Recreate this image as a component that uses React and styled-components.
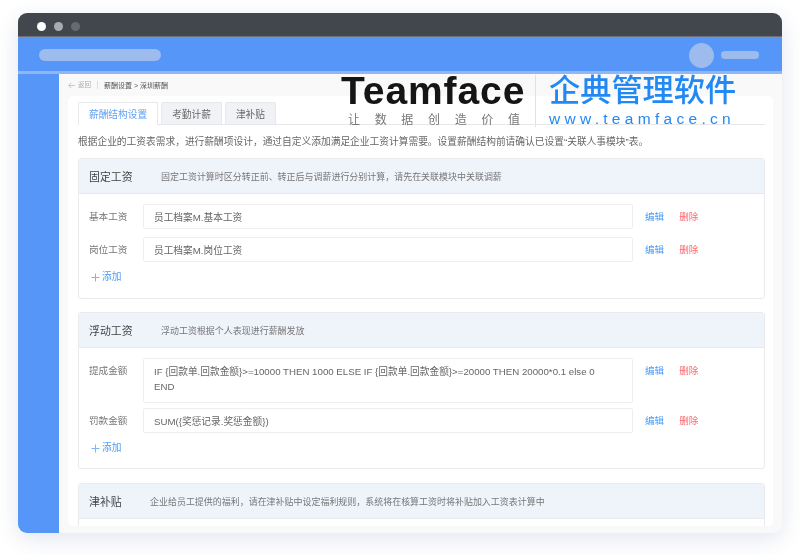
import React from "react";
import styled, { createGlobalStyle } from "styled-components";

const Global = createGlobalStyle`
  html, body { margin: 0; padding: 0; background: #fff; }
  body { font-family: "Liberation Sans", "Noto Sans CJK SC", sans-serif; }
  * { box-sizing: border-box; }
`;
const Page = styled.div`width: 800px; height: 555px; padding: 13px 18px 0; overflow: hidden;`;
const Window = styled.div`
  position: relative; width: 764px; height: 520px; border-radius: 9px; overflow: hidden; background: #f9f9f9;
  display: flex; flex-direction: column; box-shadow: 0 6px 22px rgba(60, 80, 140, 0.14); filter: blur(0.3px);
`;
const TitleBar = styled.div`flex: none; background: #41474d; display: flex; align-items: center; gap: 8px; padding: 3px 0 0 19px; border-bottom: 1px solid #6d7276; height: 24px;`;
const Dot = styled.span`width: ${p => p.$size}px; height: ${p => p.$size}px; border-radius: 50%; background: ${p => p.$color};`;
const Header = styled.div`
  height: 37px; flex: none; background: #5596f8; border-bottom: 3px solid #8fb7f4;
  display: flex; align-items: center; justify-content: space-between; padding: 2px 23px 0 21px;
`;
const Pill = styled.div`width: ${p => p.$w}px; height: ${p => p.$h}px; border-radius: 8px; background: #9dbbec;`;
const User = styled.div`display: flex; align-items: center; gap: 7px;`;
const Avatar = styled.div`width: 25px; height: 25px; border-radius: 50%; background: #9dbbec;`;
const Main = styled.div`flex: 1; min-height: 0; display: flex;`;
const Sidebar = styled.div`width: 41px; flex: none; background: #5596f8;`;
const Content = styled.div`flex: 1; min-width: 0; padding: 0 9px 7px; display: flex; flex-direction: column; background: #f9f9f9;`;
const Crumbs = styled.div`height: 22px; flex: none; display: flex; align-items: center; font-size: 7px; color: #555; white-space: nowrap;`;
const Back = styled.span`color: #aaa; font-size: 6.5px; display: flex; align-items: center; gap: 3px; padding-right: 6px; margin-right: 6px; border-right: 1px solid #ddd; line-height: 8px;`;
const Card = styled.div`flex: 1; min-height: 0; background: #fff; border-radius: 5px; padding: 6px 8px 0 10px; overflow: hidden;`;
const Tabs = styled.div`display: flex; gap: 3px; height: 23px; border-bottom: 1px solid #e6e8ec;`;
const Tab = styled.div`
  height: ${p => p.$active ? 23 : 22}px; padding: 0 10px; font-size: 9.7px; display: flex; align-items: center;
  border: 1px solid #e6e8ec; border-bottom: none; border-radius: 2px 2px 0 0;
  color: ${p => p.$active ? "#5c9ef8" : "#666"}; background: ${p => p.$active ? "#fff" : "#f0f2f6"};
`;
const Intro = styled.div`font-size: 9.72px; color: #666; line-height: 12px; margin: 11px 0 10px; white-space: nowrap;`;
const Section = styled.section`
  border: 1px solid #e9ebef; border-radius: 3px; margin-bottom: ${p => p.$mb}px; padding-bottom: ${p => p.$pb || 0}px;
`;
const SectionHead = styled.div`height: 35px; background: #eff3fa; border-bottom: 1px solid #e6e9ef; display: flex; align-items: center; padding-left: 10px; white-space: nowrap;`;
const SectionTitle = styled.div`font-size: 10.9px; color: #444; width: ${p => p.$w}px; flex: none;`;
const SectionNote = styled.div`font-size: 8.97px; color: #777;`;
const Rows = styled.div`padding: 10px 0 0 10px; display: flex; flex-direction: column; gap: ${p => p.$gap}px;`;
const Row = styled.div`display: flex; align-items: flex-start;`;
const Label = styled.div`width: 54px; height: 25px; flex: none; font-size: 9.6px; line-height: 26px; color: #777;`;
const Field = styled.div`
  width: 490px; flex: none; min-height: ${p => p.$h || 25}px; border: 1px solid #eeeef0; border-radius: 2px; padding: 5px 20px 3px 10px;
  font-size: 9.7px; line-height: 15px; color: #666;
`;
const Action = styled.a`display: block; height: 25px; font-size: 9.6px; line-height: 26px; color: ${p => p.$danger ? "#fb6a6f" : "#4d9cf6"}; margin-left: ${p => p.$danger ? 15 : 12}px; white-space: nowrap;`;
const Add = styled.div`display: flex; align-items: center; gap: 2px; font-size: 9.7px; color: #4d9cf6; margin: 9px 0 0 12px; line-height: 12px;`;
const Logo = styled.div`position: absolute; left: 323px; top: 62px; display: flex; color: #151515;`;
const LogoLeft = styled.div`width: 195px; padding-right: 12px; border-right: 1px solid #dfe1e4; height: 52px;`;
const Brand = styled.div`font-size: 39px; line-height: 31px; font-weight: 700; letter-spacing: 0.9px; white-space: nowrap;`;
const Slogan = styled.div`display: flex; justify-content: space-between; font-size: 12px; line-height: 14px; color: #777; margin-top: 7px; padding: 0 3px 0 7px;`;
const LogoRight = styled.div`padding-left: 13px; color: #2288f3;`;
const BrandCn = styled.div`font-size: 31.2px; line-height: 32px; white-space: nowrap; font-weight: 500;`;
const Site = styled.div`font-size: 15.5px; line-height: 14px; letter-spacing: 4.3px; margin-top: 5px; white-space: nowrap;`;

const Plus = () => (
  <svg width="9" height="9" viewBox="0 0 9 9" fill="none" stroke="#7db6f7" strokeWidth="1"><path d="M4.5 0.5v8M0.5 4.5h8" /></svg>
);
const Arrow = () => (
  <svg width="7" height="7" viewBox="0 0 7 7" fill="none" stroke="#bbb" strokeWidth="0.8"><path d="M3.3 0.8 0.8 3.5l2.5 2.7M0.8 3.5H7" /></svg>
);
const SalaryRow = ({ label, value, h }) => (
  <Row>
    <Label>{label}</Label>
    <Field $h={h}>{value}</Field>
    <Action>编辑</Action>
    <Action $danger>删除</Action>
  </Row>
);

export default function App() {
  return (
    <Page>
      <Global />
      <Window>
        <TitleBar>
          <Dot $size={9} $color="#fff" />
          <Dot $size={9} $color="#a9acae" />
          <Dot $size={9} $color="#656b70" />
        </TitleBar>
        <Header>
          <Pill $w={122} $h={12} />
          <User><Avatar /><Pill $w={38} $h={8} /></User>
        </Header>
        <Main>
          <Sidebar />
          <Content>
            <Crumbs>
              <Back><Arrow />返回</Back>
              薪酬设置 &gt; 深圳薪酬
            </Crumbs>
            <Card>
              <Tabs>
                <Tab $active>薪酬结构设置</Tab>
                <Tab>考勤计薪</Tab>
                <Tab>津补贴</Tab>
              </Tabs>
              <Intro>根据企业的工资表需求，进行薪酬项设计，通过自定义添加满足企业工资计算需要。设置薪酬结构前请确认已设置“关联人事模块”表。</Intro>
              <Section $pb={15} $mb={13}>
                <SectionHead>
                  <SectionTitle $w={72}>固定工资</SectionTitle>
                  <SectionNote>固定工资计算时区分转正前、转正后与调薪进行分别计算，请先在关联模块中关联调薪</SectionNote>
                </SectionHead>
                <Rows $gap={8}>
                  <SalaryRow label="基本工资" value="员工档案M.基本工资" />
                  <SalaryRow label="岗位工资" value="员工档案M.岗位工资" />
                </Rows>
                <Add><Plus />添加</Add>
              </Section>
              <Section $pb={14} $mb={14}>
                <SectionHead>
                  <SectionTitle $w={72}>浮动工资</SectionTitle>
                  <SectionNote>浮动工资根据个人表现进行薪酬发放</SectionNote>
                </SectionHead>
                <Rows $gap={5}>
                  <SalaryRow h={45} label="提成金额" value="IF {回款单.回款金额}>=10000 THEN 1000 ELSE IF {回款单.回款金额}>=20000 THEN 20000*0.1 else 0 END" />
                  <SalaryRow label="罚款金额" value="SUM({奖惩记录.奖惩金额})" />
                </Rows>
                <Add><Plus />添加</Add>
              </Section>
              <Section $pb={20} $mb={0}>
                <SectionHead>
                  <SectionTitle $w={61}>津补贴</SectionTitle>
                  <SectionNote>企业给员工提供的福利，请在津补贴中设定福利规则，系统将在核算工资时将补贴加入工资表计算中</SectionNote>
                </SectionHead>
              </Section>
            </Card>
          </Content>
        </Main>
        <Logo>
          <LogoLeft>
            <Brand>Teamface</Brand>
            <Slogan><span>让</span><span>数</span><span>据</span><span>创</span><span>造</span><span>价</span><span>值</span></Slogan>
          </LogoLeft>
          <LogoRight>
            <BrandCn>企典管理软件</BrandCn>
            <Site>www.teamface.cn</Site>
          </LogoRight>
        </Logo>
      </Window>
    </Page>
  );
}
